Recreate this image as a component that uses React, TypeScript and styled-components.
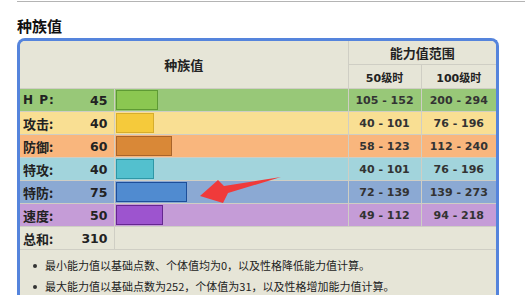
import React from 'react';
import styled, { createGlobalStyle } from 'styled-components';

const GlobalStyle = createGlobalStyle`
  html, body {
    margin: 0;
    padding: 0;
    background: #fff;
    overflow: hidden;
  }
  body {
    font-family: "DejaVu Sans", "Noto Sans CJK SC", sans-serif;
    color: #222;
  }
`;

interface Stat {
  label: string;
  value: number;
  lv50: string;
  lv100: string;
  row: string;
  bar: string;
  edge: string;
}

const stats: Stat[] = [
  { label: 'H P:', value: 45, lv50: '105 - 152', lv100: '200 - 294', row: '#98c878', bar: '#8bc751', edge: '#5e9a34' },
  { label: '攻击:', value: 40, lv50: '40 - 101', lv100: '76 - 196', row: '#f9df93', bar: '#f5ca3b', edge: '#d6ad2c' },
  { label: '防御:', value: 60, lv50: '58 - 123', lv100: '112 - 240', row: '#f9b67d', bar: '#d98837', edge: '#a9642a' },
  { label: '特攻:', value: 40, lv50: '40 - 101', lv100: '76 - 196', row: '#a2d4dc', bar: '#53c0ce', edge: '#2e97a6' },
  { label: '特防:', value: 75, lv50: '72 - 139', lv100: '139 - 273', row: '#8ba9d3', bar: '#508bd0', edge: '#1d4e99' },
  { label: '速度:', value: 50, lv50: '49 - 112', lv100: '94 - 218', row: '#c59cd7', bar: '#9d54cf', edge: '#652690' },
];

const Page = styled.div`
  position: relative;
  width: 525px;
  height: 295px;
  padding: 1px 0 0 17px;
  box-sizing: border-box;
`;

const Rule = styled.div`
  height: 1px;
  background: #b4b4b4;
`;

const Title = styled.h2`
  margin: 14px 0 2px;
  font-family: "Noto Sans CJK SC", sans-serif;
  font-size: 15px;
  line-height: 20px;
  font-weight: 700;
  color: #111;
`;

const Box = styled.div`
  width: 482px;
  box-sizing: border-box;
  border: 3px solid #5584dc;
  border-bottom: none;
  border-radius: 8px 8px 0 0;
  background: #e6e5d7;
  overflow: hidden;
`;

const Table = styled.table`
  width: 476px;
  table-layout: fixed;
  border-collapse: collapse;
  border-style: hidden;

  td, th {
    border: 1px solid #cfcec4;
    padding: 0;
  }
`;

const Head = styled.th<{ $h: number }>`
  height: ${p => p.$h}px;
  font-family: "Noto Sans CJK SC", sans-serif;
  font-size: 13px;
  font-weight: 700;
  color: #222;
  text-align: center;
  vertical-align: middle;
  background: #e6e5d7;
`;

const SubHead = styled(Head)`
  font-family: "DejaVu Sans", "Noto Sans CJK SC", sans-serif;
  font-size: 11px;
`;

const Row = styled.tr<{ $bg: string }>`
  background: ${p => p.$bg};
  td {
    height: 22px;
    vertical-align: middle;
  }
`;

const NameCell = styled.td`
  && {
    padding: 0 6px 0 3px;
  }
`;

const NameLine = styled.div`
  display: flex;
  justify-content: space-between;
  align-items: center;
  font-weight: 700;
  color: #222;
`;

const Label = styled.span<{ $spaced?: boolean }>`
  font-family: ${p => (p.$spaced ? '"DejaVu Sans", sans-serif' : '"Noto Sans CJK SC", sans-serif')};
  font-size: ${p => (p.$spaced ? '12px' : '13px')};
  letter-spacing: ${p => (p.$spaced ? '1px' : '0')};
`;

const Value = styled.span`
  font-size: 12.5px;
`;

const BarCell = styled.td`
  && {
    padding: 0 0 0 1px;
  }
`;

const Bar = styled.div<{ $fill: string; $edge: string }>`
  height: 20px;
  box-sizing: border-box;
  background: ${p => p.$fill};
  border: 1px solid ${p => p.$edge};
`;

const Range = styled.td`
  text-align: center;
  font-size: 11px;
  font-weight: 700;
  color: #333;
`;

const NoteCell = styled.td`
  && {
    padding: 5px 0 0 12px;
  }
`;

const Notes = styled.ul`
  margin: 0;
  padding: 0;
  list-style: none;
`;

const Note = styled.li`
  position: relative;
  padding-left: 13px;
  font-family: "Noto Sans CJK SC", sans-serif;
  font-size: 11px;
  line-height: 21px;
  color: #222;

  &::before {
    content: '';
    position: absolute;
    left: 1px;
    top: 9px;
    width: 4px;
    height: 4px;
    border-radius: 50%;
    background: #333;
  }
`;

const Arrow = styled.svg`
  position: absolute;
  left: 0;
  top: 0;
  pointer-events: none;
`;

const App: React.FC = () => {
  const total = stats.reduce((s, x) => s + x.value, 0);
  return (
    <>
      <GlobalStyle />
      <Page>
        <Rule />
        <Title>种族值</Title>
        <Box>
          <Table>
            <colgroup>
              <col style={{ width: 94 }} />
              <col style={{ width: 234 }} />
              <col style={{ width: 73 }} />
              <col style={{ width: 75 }} />
            </colgroup>
            <tbody>
              <tr>
                <Head $h={23} colSpan={2} rowSpan={2}>种族值</Head>
                <Head $h={23} colSpan={2}>能力值范围</Head>
              </tr>
              <tr>
                <SubHead $h={23}>50级时</SubHead>
                <SubHead $h={23}>100级时</SubHead>
              </tr>
              {stats.map(s => (
                <Row key={s.label} $bg={s.row}>
                  <NameCell>
                    <NameLine>
                      <Label $spaced={s.label === 'H P:'}>{s.label}</Label>
                      <Value>{s.value}</Value>
                    </NameLine>
                  </NameCell>
                  <BarCell>
                    <Bar $fill={s.bar} $edge={s.edge} style={{ width: Math.round((s.value / 255) * 240) }} />
                  </BarCell>
                  <Range>{s.lv50}</Range>
                  <Range>{s.lv100}</Range>
                </Row>
              ))}
              <Row $bg="#e6e5d7">
                <NameCell>
                  <NameLine>
                    <Label>总和:</Label>
                    <Value>{total}</Value>
                  </NameLine>
                </NameCell>
                <td colSpan={3} />
              </Row>
              <tr>
                <NoteCell colSpan={4}>
                  <Notes>
                    <Note>最小能力值以基础点数、个体值均为0，以及性格降低能力值计算。</Note>
                    <Note>最大能力值以基础点数为252，个体值为31，以及性格增加能力值计算。</Note>
                  </Notes>
                </NoteCell>
              </tr>
            </tbody>
          </Table>
        </Box>
        <Arrow width={525} height={295} viewBox="0 0 525 295">
          <polygon
            points="200,196 218,180 224,186 281,177 228,193 223,203"
            fill="#f03a3a"
          />
        </Arrow>
      </Page>
    </>
  );
};

export default App;
